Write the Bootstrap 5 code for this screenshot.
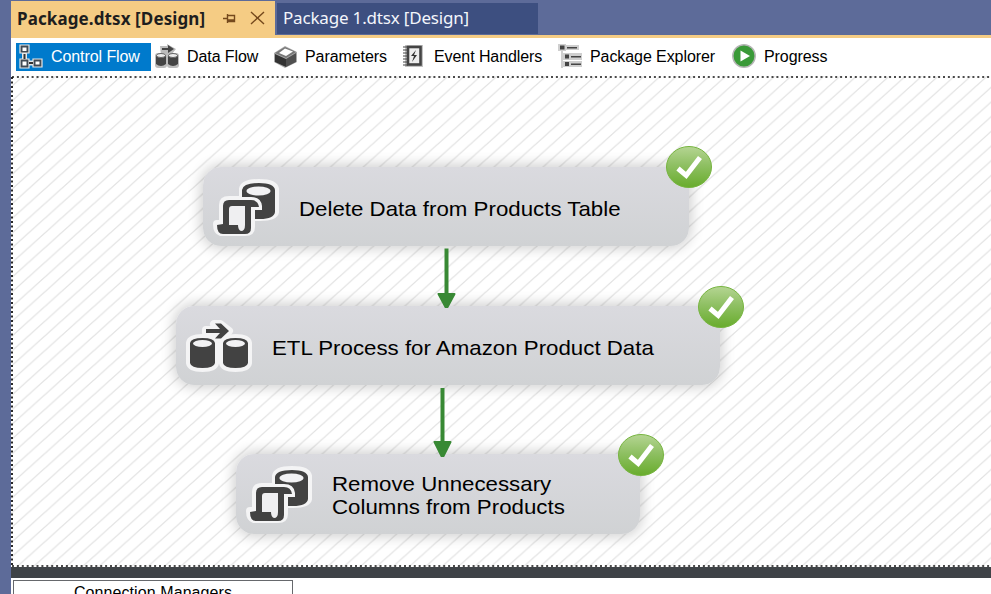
<!DOCTYPE html>
<html lang="en">
<head>
<meta charset="utf-8">
<title>Package.dtsx [Design]</title>
<link href="https://cdn.jsdelivr.net/npm/bootstrap@5.3.0/dist/css/bootstrap.min.css" rel="stylesheet">
<style>
body{background:#5d6b99;font-family:"Liberation Sans",Arial,sans-serif;color:#000;height:594px}
.designer{height:594px;padding-left:11px}
.doc-tabs{height:38px;padding-top:2px;border-bottom:3px solid #f5cc84;font:17px/1 "Noto Sans","Open Sans",sans-serif}
.doc-tab{white-space:nowrap}
.doc-tab.current{width:264px;height:34px;margin-top:-1px;background:#f5cc84;color:#1e1e1e;padding-left:6px;font-weight:700}
.doc-tab.other{width:261px;height:31px;margin:1px 0 0 2px;background:#3d4f80;color:#f3f5fb;padding-left:6px}
.tab-a{width:206px;letter-spacing:.1px}
.tab-b{letter-spacing:-.18px;padding-bottom:2px}
.views{height:38px;padding:5px 0 0 5px;font-size:16px;letter-spacing:-.08px}
.view{height:28px;white-space:nowrap}
.view svg{flex:none}
.view.on{background:#007acc;color:#fff}
.surface{height:491px;overflow:hidden}
.task{position:absolute;border-radius:18px;background:linear-gradient(#dadadf,#d0d2d4);box-shadow:0 0 14px 2px rgba(0,0,0,.2);font-size:21px;line-height:23px;white-space:nowrap}
.task>svg{flex:none}
.task-name{transform:scaleX(1.061);transform-origin:left center}
.ok{position:absolute;top:-21px;right:-23px}
.ok.low{top:-20px;right:-24px}
.wires{position:absolute;left:0;top:0}
.splitter{height:11px;background:#3f4347}
.tray{height:17px;padding:2px 0 0 2px;overflow:hidden}
.tray-tab{width:280px;height:30px;border:1px solid #66686c;padding-top:3px;font-size:16px;line-height:18px;letter-spacing:.08px}
</style>
<script src="https://cdn.jsdelivr.net/npm/bootstrap@5.3.0/dist/js/bootstrap.bundle.min.js"></script>
</head>
<body class="overflow-hidden">
<svg width="0" height="0" class="position-absolute">
<defs>
<linearGradient id="green" x1="0" y1="0" x2="0" y2="1"><stop offset="0" stop-color="#b5d593"/><stop offset=".45" stop-color="#8fc063"/><stop offset="1" stop-color="#68ac2c"/></linearGradient>
<symbol id="check" viewBox="0 0 46 42"><ellipse cx="23" cy="21" rx="22.5" ry="20.5" fill="url(#green)" stroke="#76b43f"/><path d="M12 22.500 L20.200 29.500 L34 11.500" fill="none" stroke="#fff" stroke-width="5"/></symbol>
<symbol id="sql" viewBox="0 0 68 60">
<g fill="#f4f4f5" stroke="#f4f4f5" stroke-width="8" stroke-linejoin="round"><path d="M30 10 Q31 4 46 4 Q61 4 62 10 V33 Q61 38 47 38 H42 V24 H30Z"/><path d="M10 45 V26 Q10 21 16 21 H38 Q44 21 45 28 H38 V48 Q38 53 32 53 H8 Q4 52 4 45Z"/></g>
<path d="M29 11 Q30 4 46 4 Q61 4 62 11 V33 Q61 40 47 40 H42 V31 H49 V27 Q48 18 38 18 H29Z" fill="#424242"/><ellipse cx="45.500" cy="12" rx="12" ry="4.500" fill="#f2f2f4"/>
<path d="M10 45 V27 Q10 21 16 21 H38 Q45 21 46 28 H38 V49 Q38 55 32 55 H10 Q4 55 4 46Z" fill="#424242"/><path d="M16 46 V30 Q16 27 19 27 H32 V46 Q32 52 28 52 Q25 51 25 46Z" fill="#efeff1"/></symbol>
<symbol id="flow" viewBox="0 0 68 56">
<g fill="#f4f4f5" stroke="#f4f4f5" stroke-width="8" stroke-linejoin="round"><path d="M4 25 Q5 20 16.500 20 Q28 20 29 25 V45 Q28 50 16.500 50 Q5 50 4 45Z"/><path d="M37 25 Q38 20 49.500 20 Q61 20 62 25 V45 Q61 50 49.500 50 Q38 50 37 45Z"/><path d="M20 12 H34 L28 6 H34 L43 13 L34 20 H28 L33 15 H20Z"/></g>
<g fill="#424242"><path d="M4 25 Q5 20 16.500 20 Q28 20 29 25 V45 Q28 50 16.500 50 Q5 50 4 45Z"/><path d="M37 25 Q38 20 49.500 20 Q61 20 62 25 V45 Q61 50 49.500 50 Q38 50 37 45Z"/><path d="M20 11 H34 L29 5.500 H35 L43 13 L35 20.500 H29 L34 15 H20Z"/></g>
<ellipse cx="16.500" cy="25.500" rx="9.500" ry="3.500" fill="#f2f2f4"/><ellipse cx="49.500" cy="25.500" rx="9.500" ry="3.500" fill="#f2f2f4"/></symbol>
<pattern id="hatch" width="16.34" height="14.7" patternUnits="userSpaceOnUse" patternTransform="translate(1.2 10)"><path d="M-1.634 16.170 L17.974 -1.470 M-1.634 1.470 L1.634 -1.470 M14.706 16.170 L17.974 13.230" stroke="#e2e2e2" stroke-width="1.250"/></pattern>
</defs>
</svg>

<main class="designer d-flex flex-column">
<div class="doc-tabs d-flex align-items-start flex-shrink-0">
 <div class="doc-tab current d-flex align-items-center"><span class="tab-a">Package.dtsx [Design]</span>
  <svg width="46" height="20" fill="none" stroke="#75491c" stroke-width="1.400"><path d="M0 10.500h4M4.500 6v9M5 7.500h6.500v6H5M5 12h7M28 4l13 12M41 4L28 16"/></svg></div>
 <div class="doc-tab other d-flex align-items-center"><span class="tab-b">Package 1.dtsx [Design]</span></div>
</div>
<nav class="views d-flex align-items-start flex-shrink-0 bg-white">
 <div class="view on d-flex align-items-center" style="width:135px"><svg width="35" height="28"><path d="M8.500 9v8M12 20h6" stroke="#e8e8e8" stroke-width="5"/><g fill="#414b55" stroke="#e8e8e8" stroke-width="1.200"><path d="M4 2h9v8H4zM4 16h9v9H4zM17 16h9v8h-9z"/></g><path d="M8.500 11v5M13 20h4" stroke="#333" stroke-width="2"/><path d="M6.500 4.500h4v3.500h-4zM6.500 18.500h4v4h-4zM19.500 18.500h4v3h-4z" fill="#fff"/></svg>Control Flow</div>
 <div class="view d-flex align-items-center" style="width:122px"><svg width="36" height="28"><g fill="#bcbcbc"><rect x="4" y="10" width="12" height="15" rx="3"/><rect x="16" y="10" width="12" height="15" rx="3"/><path d="M9 3h7V1l9 5-5 6H10z"/></g><g fill="#444"><path d="M5 12h10v9q-5 4-10 0zM17 12h10v9q-5 4-10 0z"/><path d="M11 5h6V2l6 4-6 4V7h-6z"/></g><g fill="#eee" stroke="#666"><ellipse cx="10" cy="12.500" rx="4.500" ry="2"/><ellipse cx="22" cy="12.500" rx="4.500" ry="2"/></g></svg>Data Flow</div>
 <div class="view d-flex align-items-center" style="width:128px"><svg width="32" height="28"><path d="M1 10L12 3L24 9V19L12 25L1 19Z" fill="#aaa"/><path d="M2 11L13 16V24L2 19Z" fill="#333"/><path d="M13 16L23 10V19L13 24Z" fill="#505050"/><path d="M2 10L12 4L23 9L13 15Z" fill="#777"/><path d="M6 10L12 5.500L20 8.500L13 13Z" fill="#fff"/></svg>Parameters</div>
 <div class="view d-flex align-items-center" style="width:156px"><svg width="33" height="28"><rect x="4" y="2" width="18" height="22" fill="#c3c3c3"/><rect x="7" y="4" width="12.500" height="17.500" fill="#eee" stroke="#444" stroke-width="2.600"/><path d="M2 4h5M2 7h5M2 10h5M2 13h5M2 16h5M2 19h5M2 22h5" stroke="#444" stroke-width="1.200"/><path d="M15 7l-5 6h3l-2 6 5-7h-3z" fill="#333"/></svg>Event Handlers</div>
 <div class="view d-flex align-items-center" style="width:174px"><svg width="33" height="28"><path d="M1 1h8v7H1zM9 2h13v5H9zM5 10h20v7H5zM5 18h20v6H5zM4 8h2v17H4z" fill="#cfcfcf"/><g fill="#444"><path d="M3 2.500h4.500v4H3zM8 11.500h4v4H8zM8 19h4v4H8z"/><path d="M10 4h10v1.400H10zM14 13h10v1.400H14zM14 20.500h10v1.400H14z"/></g></svg>Package Explorer</div>
 <div class="view d-flex align-items-center"><svg width="33" height="28"><circle cx="13" cy="13" r="11.200" fill="#3a9a38" stroke="#b6b6b6" stroke-width="1.500"/><path d="M9.500 7.500V18.500L19 13z" fill="#fff"/></svg>Progress</div>
</nav>
<section class="surface position-relative bg-white flex-shrink-0">
 <svg class="wires" width="980" height="491"><rect width="980" height="491" fill="url(#hatch)"/><path d="M1 1H980M1 490H980" stroke="#111" stroke-width="1.600" stroke-dasharray="2 2.900"/><path d="M1 1V490" stroke="#111" stroke-width="1.800" stroke-dasharray="2 2.500"/></svg>
 <div class="task d-flex align-items-center" style="left:192px;top:91px;width:486px;height:79px"><svg width="68" height="60" style="margin-left:10px;margin-top:4px"><use href="#sql"/></svg><span class="task-name" style="margin-left:18px;margin-top:3px">Delete Data from Products Table</span><svg class="ok" width="46" height="42"><use href="#check"/></svg></div>
 <div class="task d-flex align-items-center" style="left:165px;top:230px;width:544px;height:79px"><svg width="68" height="56" style="margin-left:10px"><use href="#flow"/></svg><span class="task-name" style="margin-left:18px;margin-top:3px">ETL Process for Amazon Product Data</span><svg class="ok low" width="46" height="42"><use href="#check"/></svg></div>
 <div class="task d-flex align-items-center" style="left:225px;top:378px;width:404px;height:80px"><svg width="68" height="60" style="margin-left:10px;margin-top:3px"><use href="#sql"/></svg><span class="task-name" style="margin-left:18px;margin-top:2px">Remove Unnecessary<br>Columns from Products</span><svg class="ok low" width="46" height="42"><use href="#check"/></svg></div>
 <svg class="wires" width="980" height="491"><g stroke="#388934" fill="#388934"><path d="M435.500 172.500V218M431.500 312V366" stroke-width="4"/><path d="M427.500 218H443.500L436.500 231H434.500ZM423.500 366H439.500L432.500 380H430.500Z" stroke-width="2" stroke-linejoin="round"/></g></svg>
</section>
<div class="splitter flex-shrink-0"></div>
<div class="tray bg-white flex-shrink-0"><div class="tray-tab text-center">Connection Managers</div></div>
</main>
</body>
</html>
